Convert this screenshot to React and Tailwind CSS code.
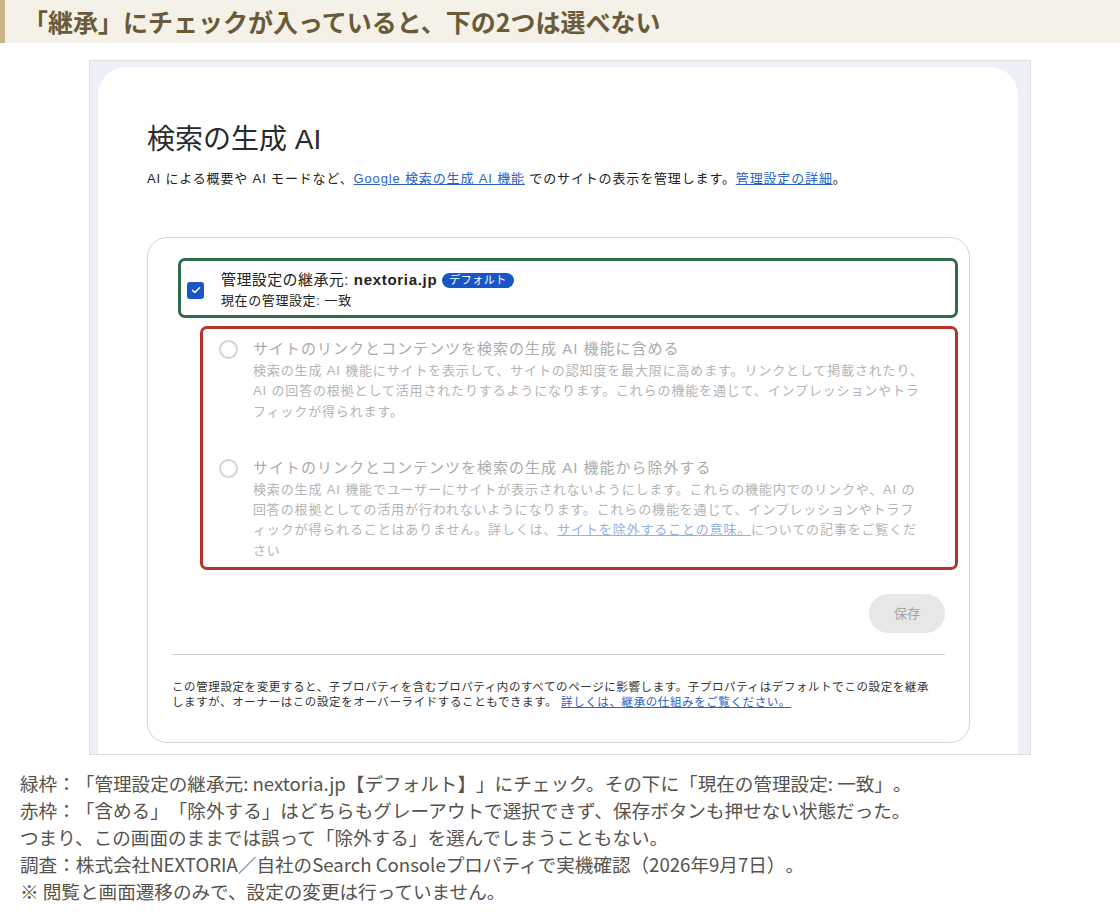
const jp = { fontFamily: '"Noto Sans CJK JP", sans-serif' };
const gs = { fontFamily: '"Liberation Sans", "Noto Sans CJK JP", sans-serif' };

const Radio = () => (
  <div className="mt-[1px] h-[19px] w-[19px] shrink-0 rounded-full border-2 border-[#d4d4d4] bg-white" />
);

const Checkbox = () => (
  <div className="flex h-[17px] w-[17px] shrink-0 items-center justify-center rounded-[3px] bg-[#1b56c6]">
    <svg width="12" height="12" viewBox="0 0 24 24" fill="none">
      <path d="M5 12.5l4.5 4.5L19 7.5" stroke="#fff" strokeWidth="3" strokeLinecap="round" strokeLinejoin="round" />
    </svg>
  </div>
);

const Option = ({ title, lines, className = "" }) => (
  <div className={`flex ${className}`}>
    <Radio />
    <div className="ml-[15px]">
      <div className="text-[15px] leading-[20px] tracking-[1px] text-[#ababab] whitespace-nowrap">{title}</div>
      <div className="mt-[2px] text-[13px] leading-[20.3px] tracking-[0.85px] text-[#b4b4b4] whitespace-nowrap">
        {lines.map((l, i) => (
          <div key={i}>{l}</div>
        ))}
      </div>
    </div>
  </div>
);

export default function App() {
  return (
    <div className="w-[1120px] bg-white pb-6 [text-spacing-trim:space-all]" style={jp}>
      <div className="flex h-[43px] items-center border-l-[5px] border-[#c8b68a] bg-[#f4f1e9] pl-[18px]">
        <h1 className="text-[25px] font-bold leading-none text-[#6a5a37]">
          「継承」にチェックが入っていると、下の2つは選べない
        </h1>
      </div>

      <div className="mx-auto mt-[17px] h-[695px] w-[942px] overflow-hidden border border-[#dedede] bg-[#edf1f7] pl-[8px] pr-[12px] pt-[6px]">
        <div className="h-full rounded-t-[28px] bg-white pl-[49px] pt-[56px]" style={gs}>
          <h2 className="text-[28px] leading-[34px] text-[#2a2a2a]">検索の生成 AI</h2>
          <p className="mt-[12px] whitespace-nowrap text-[13px] leading-[20px] tracking-[0.85px] text-[#222]">
            AI による概要や AI モードなど、
            <span className="text-[#2a62c9] underline">Google 検索の生成 AI 機能</span>
            {" "}でのサイトの表示を管理します。
            <span className="text-[#2a62c9] underline">管理設定の詳細</span>。
          </p>

          <div className="mt-[48px] w-[823px] rounded-[20px] border border-[#d3d3d3] pb-[32px] pt-[20px]">
            <div className="ml-[30px] flex h-[60px] w-[780px] items-center rounded-[7px] border-[3px] border-[#2f6a4b] pl-[6px] pt-[4px]">
              <Checkbox />
              <div className="ml-[17px]">
                <div className="flex items-center text-[15px] leading-[20px] tracking-[0.4px] text-[#222]">
                  <span>管理設定の継承元: </span>
                  <span className="ml-[5px] font-bold tracking-[0.7px]">nextoria.jp</span>
                  <span className="ml-[5px] rounded-full bg-[#1a55c8] px-[7px] text-[11px] leading-[15px] tracking-[0.5px] text-white">
                    デフォルト
                  </span>
                </div>
                <div className="mt-[2px] text-[13px] leading-[18px] tracking-[0.6px] text-[#222]">現在の管理設定: 一致</div>
              </div>
            </div>

            <div className="ml-[52px] mt-[8px] h-[244px] w-[758px] rounded-[7px] border-[3px] border-[#b3342b] pl-[16px] pt-[10px]">
              <Option
                title="サイトのリンクとコンテンツを検索の生成 AI 機能に含める"
                lines={[
                  "検索の生成 AI 機能にサイトを表示して、サイトの認知度を最大限に高めます。リンクとして掲載されたり、",
                  "AI の回答の根拠として活用されたりするようになります。これらの機能を通じて、インプレッションやトラ",
                  "フィックが得られます。",
                ]}
              />
              <Option
                className="mt-[36px]"
                title="サイトのリンクとコンテンツを検索の生成 AI 機能から除外する"
                lines={[
                  "検索の生成 AI 機能でユーザーにサイトが表示されないようにします。これらの機能内でのリンクや、AI の",
                  "回答の根拠としての活用が行われないようになります。これらの機能を通じて、インプレッションやトラフ",
                  <>
                    ィックが得られることはありません。詳しくは、
                    <span className="text-[#93b2e6] underline">サイトを除外することの意味。</span>
                    についての記事をご覧くだ
                  </>,
                  "さい",
                ]}
              />
            </div>

            <div className="mt-[24px] flex justify-end pr-[24px]">
              <button className="flex h-[39px] w-[76px] items-center justify-center rounded-full bg-[#e7e7e7] text-[13px] text-[#a3a3a3]">
                保存
              </button>
            </div>

            <div className="ml-[24px] mr-[24px] mt-[21px] h-px bg-[#d0d0d0]" />

            <div className="ml-[24px] mt-[25px] whitespace-nowrap text-[11.5px] leading-[15px] tracking-[0.6px] text-[#333]">
              <div>この管理設定を変更すると、子プロパティを含むプロパティ内のすべてのページに影響します。子プロパティはデフォルトでこの設定を継承</div>
              <div>
                しますが、オーナーはこの設定をオーバーライドすることもできます。{" "}
                <span className="text-[#2a62c9] underline">詳しくは、継承の仕組みをご覧ください。</span>
              </div>
            </div>
          </div>
        </div>
      </div>

      <div className="mt-[14px] pl-[20px] text-[18.6px] leading-[27px] text-[#57524b]">
        <p>緑枠：「管理設定の継承元: nextoria.jp【デフォルト】」にチェック。その下に「現在の管理設定: 一致」。</p>
        <p>赤枠：「含める」「除外する」はどちらもグレーアウトで選択できず、保存ボタンも押せない状態だった。</p>
        <p>つまり、この画面のままでは誤って「除外する」を選んでしまうこともない。</p>
        <p>調査：株式会社NEXTORIA／自社のSearch Consoleプロパティで実機確認（2026年9月7日）。</p>
        <p>※ 閲覧と画面遷移のみで、設定の変更は行っていません。</p>
      </div>
    </div>
  );
}
